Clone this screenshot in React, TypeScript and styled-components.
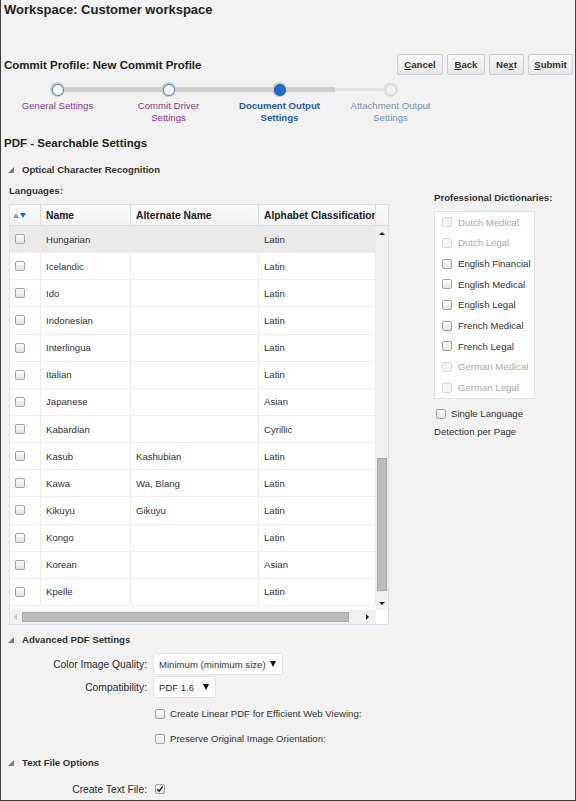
import React from 'react';
import styled, { createGlobalStyle, css } from 'styled-components';

const GlobalStyle = createGlobalStyle`
  html, body {
    margin: 0;
    padding: 0;
    background: #f2f2f2;
  }
  body {
    font-family: "Liberation Sans", Arial, sans-serif;
    color: #333;
  }
  * {
    box-sizing: border-box;
  }
`;

const Page = styled.div`
  width: 576px;
  height: 801px;
  overflow: hidden;
  background: #f2f2f2;
  border-left: 1px solid #3c3c3c;
  border-right: 1px solid #3c3c3c;
  border-bottom: 1px solid #3c3c3c;
  padding: 2px 1px 0 3px;
  font-size: 9.6px;
`;

const Title = styled.h1`
  margin: 0;
  font-size: 13px;
  line-height: 16px;
  font-weight: bold;
  color: #222;
`;

const ProfileBar = styled.div`
  display: flex;
  align-items: center;
  justify-content: space-between;
  margin-top: 36px;
  height: 21px;
  padding-right: 1px;
`;

const ProfileTitle = styled.h2`
  margin: 0;
  font-size: 11.5px;
  font-weight: bold;
  color: #222;
`;

const ButtonGroup = styled.div`
  display: flex;
  gap: 4px;
`;

const Button = styled.button<{ $w: number }>`
  width: ${p => p.$w}px;
  height: 21px;
  padding: 0;
  border: 1px solid #c9cdd1;
  border-radius: 2px;
  background: linear-gradient(#f8f8f8, #e8e8e8);
  font-family: inherit;
  font-size: 9.6px;
  font-weight: bold;
  color: #333;

  u {
    text-decoration: underline;
  }
`;

/* ---------- train ---------- */

const Train = styled.div`
  display: flex;
  margin: 7px 0 0 -2px;
`;

type Seg = 'thick' | 'thin' | undefined;

const segStyle = (s: Seg) =>
  s === 'thick'
    ? css`
        top: 5px;
        height: 5px;
        background: #cfcfcf;
      `
    : css`
        top: 6px;
        height: 3px;
        background: #e3e3e3;
      `;

const Step = styled.div<{ $before?: Seg; $after?: Seg }>`
  position: relative;
  width: 111px;
  display: flex;
  flex-direction: column;
  align-items: center;

  &::before {
    content: '';
    position: absolute;
    right: 50%;
    width: 50%;
    display: ${p => (p.$before ? 'block' : 'none')};
    ${p => segStyle(p.$before)}
  }

  &::after {
    content: '';
    position: absolute;
    left: 50%;
    width: 50%;
    display: ${p => (p.$after ? 'block' : 'none')};
    ${p => segStyle(p.$after)}
  }
`;

type StopState = 'visited' | 'current' | 'unvisited';

const Stop = styled.div<{ $state: StopState }>`
  position: relative;
  z-index: 1;
  width: 15px;
  height: 15px;
  border-radius: 50%;
  background: ${p => (p.$state === 'unvisited' ? '#e4e4e4' : '#c9c9c9')};
  display: flex;
  align-items: center;
  justify-content: center;

  &::after {
    content: '';
    width: 10px;
    height: 10px;
    border-radius: 50%;
    ${p =>
      p.$state === 'visited'
        ? css`
            background: #fff;
            border: 1.5px solid #3b83d6;
          `
        : p.$state === 'current'
        ? css`
            background: #1c6fd0;
            border: 1px solid #1761b8;
          `
        : css`
            background: #f1f1f1;
            border: 1px solid #d4d4d4;
          `}
  }
`;

const StepLabel = styled.div<{ $state: StopState }>`
  margin-top: 3px;
  text-align: center;
  line-height: 11.5px;
  font-size: 9.6px;
  color: ${p =>
    p.$state === 'visited' ? '#8a3a93' : p.$state === 'current' ? '#255b9c' : '#7391b6'};
  font-weight: ${p => (p.$state === 'current' ? 'bold' : 'normal')};
`;

/* ---------- sections ---------- */

const SectionTitle = styled.h3`
  margin: 13px 0 0;
  font-size: 11.5px;
  line-height: 14px;
  font-weight: bold;
  color: #222;
`;

const Disclosure = styled.div<{ $mt: number }>`
  display: flex;
  align-items: center;
  gap: 8px;
  margin-top: ${p => p.$mt}px;
  padding-left: 4px;
  height: 14px;
  font-size: 9.6px;
  font-weight: bold;
  color: #333;
`;

const Triangle = styled.span`
  width: 0;
  height: 0;
  border-left: 6px solid transparent;
  border-bottom: 6px solid #7a7a7a;
  margin-top: 1px;
`;

const OcrRow = styled.div`
  display: flex;
  align-items: flex-start;
`;

const LeftColumn = styled.div`
  margin-left: 5px;
`;

const FieldLabel = styled.div`
  margin-top: 9px;
  line-height: 12px;
  font-weight: bold;
  color: #333;
`;

/* ---------- table ---------- */

const COLS = [31, 90, 128, 117];

const Table = styled.div`
  margin-top: 7px;
  width: 380px;
  border: 1px solid #d9e0e7;
  background: #fff;
`;

const HeaderRow = styled.div`
  display: flex;
  height: 21px;
  background: linear-gradient(#fbfbfb, #f3f3f3);
  border-bottom: 1px solid #dedede;
`;

const HeaderCell = styled.div<{ $w: number; $pad?: number }>`
  width: ${p => p.$w}px;
  flex: none;
  display: flex;
  align-items: center;
  padding-left: ${p => p.$pad ?? 5}px;
  border-right: 1px solid #dcdcdc;
  font-size: 10.3px;
  font-weight: bold;
  color: #222;
  white-space: nowrap;
  overflow: hidden;
`;

const SortArrows = styled.div`
  display: flex;
  gap: 1px;
`;

const Arrow = styled.span<{ $dir: 'up' | 'down'; $color: string }>`
  width: 0;
  height: 0;
  border-left: 3.5px solid transparent;
  border-right: 3.5px solid transparent;
  ${p =>
    p.$dir === 'up'
      ? `border-bottom: 5px solid ${p.$color};`
      : `border-top: 5px solid ${p.$color};`}
`;

const BodyArea = styled.div`
  display: flex;
  height: 384px;
`;

const Rows = styled.div`
  width: 366px;
  overflow: hidden;
`;

const Row = styled.div<{ $selected?: boolean }>`
  display: flex;
  height: 27.15px;
  background: ${p => (p.$selected ? '#eaeaea' : '#fff')};
  border-bottom: 1px solid #efefef;
`;

const Cell = styled.div<{ $w: number }>`
  width: ${p => p.$w}px;
  flex: none;
  display: flex;
  align-items: center;
  padding-left: 5px;
  border-right: 1px solid #ececec;
  white-space: nowrap;
  overflow: hidden;
  color: #333;
`;

const VScroll = styled.div`
  width: 12px;
  background: #f1f1f1;
  display: flex;
  flex-direction: column;
  align-items: center;
  padding: 6px 0 5px;
`;

const Thumb = styled.div<{ $vertical?: boolean }>`
  background: #bcbcbc;
  border: 1px solid #a9a9a9;
  ${p =>
    p.$vertical
      ? css`
          width: 10px;
          height: 133px;
          margin-top: auto;
          margin-bottom: 11px;
        `
      : css`
          height: 10px;
          width: 327px;
        `}
`;

const TinyArrow = styled.span<{ $dir: 'up' | 'down' | 'left' | 'right'; $color?: string }>`
  width: 0;
  height: 0;
  flex: none;
  ${p => {
    const c = p.$color || '#222';
    switch (p.$dir) {
      case 'up':
        return `border-left: 3px solid transparent; border-right: 3px solid transparent; border-bottom: 3px solid ${c};`;
      case 'down':
        return `border-left: 3px solid transparent; border-right: 3px solid transparent; border-top: 3px solid ${c};`;
      case 'left':
        return `border-top: 3px solid transparent; border-bottom: 3px solid transparent; border-right: 3px solid ${c};`;
      default:
        return `border-top: 3px solid transparent; border-bottom: 3px solid transparent; border-left: 3px solid ${c};`;
    }
  }}
`;

const HScrollRow = styled.div`
  display: flex;
  height: 14px;
`;

const HScroll = styled.div`
  width: 366px;
  display: flex;
  align-items: center;
  background: #f1f1f1;
  padding: 0 7px 0 4px;
  gap: 5px;

  ${TinyArrow}:last-child {
    margin-left: auto;
  }
`;

const Corner = styled.div`
  width: 12px;
  background: #fff;
`;

/* ---------- checkboxes ---------- */

const Box = styled.span<{ $disabled?: boolean }>`
  width: 10px;
  height: 10px;
  flex: none;
  border-radius: 2px;
  border: 1px solid ${p => (p.$disabled ? '#d9d9d9' : '#a3a3a3')};
  background: ${p => (p.$disabled ? '#f4f4f4' : 'linear-gradient(#fdfdfd, #e4e4e4)')};
  display: inline-flex;
  align-items: center;
  justify-content: center;
`;

const CheckBox = ({ disabled, checked }: { disabled?: boolean; checked?: boolean }) => (
  <Box $disabled={disabled}>
    {checked && (
      <svg width="8" height="8" viewBox="0 0 8 8">
        <path d="M1.2 4.2 L3.1 6.2 L6.9 1.4" fill="none" stroke="#222" strokeWidth="1.5" />
      </svg>
    )}
  </Box>
);

/* ---------- dictionaries ---------- */

const RightPanel = styled.div`
  margin-left: 45px;
  padding-top: 16px;
`;

const DictLabel = styled.div`
  line-height: 12px;
  font-weight: bold;
  color: #333;
`;

const DictBox = styled.div`
  margin-top: 7px;
  width: 101px;
  border: 1px solid #e2e2e2;
  background: #fff;
  padding-left: 7px;
`;

const DictItem = styled.div<{ $disabled?: boolean }>`
  display: flex;
  align-items: center;
  gap: 6px;
  height: 20.66px;
  white-space: nowrap;
  color: ${p => (p.$disabled ? '#a9a9a9' : '#333')};
`;

const SingleLang = styled.div`
  display: flex;
  align-items: center;
  gap: 5px;
  margin-top: 8px;
  padding-left: 2px;
  height: 14px;
`;

const Note = styled.div`
  margin-top: 5px;
  line-height: 12px;
`;

/* ---------- form ---------- */

const FormRow = styled.div<{ $h: number; $mt?: number }>`
  display: flex;
  align-items: center;
  height: ${p => p.$h}px;
  margin-top: ${p => p.$mt || 0}px;
`;

const FormLabel = styled.div`
  width: 143px;
  flex: none;
  text-align: right;
  font-size: 10.3px;
  color: #2a2a2a;
`;

const Control = styled.div`
  margin-left: 6px;
  display: flex;
  align-items: center;
  gap: 5px;
`;

const CheckControl = styled(Control)`
  margin-left: 151px;
`;

const Select = styled.div<{ $w: number }>`
  width: ${p => p.$w}px;
  height: 22px;
  display: flex;
  align-items: center;
  justify-content: space-between;
  padding: 0 6px 0 5px;
  background: #fff;
  border: 1px solid #e3e3e3;
  border-radius: 2px;
  color: #333;
`;

const CaretDown = styled.span`
  width: 0;
  height: 0;
  border-left: 3.5px solid transparent;
  border-right: 3.5px solid transparent;
  border-top: 6px solid #111;
`;

const TextCheck = styled.div`
  margin-left: 2px;
  display: flex;
`;

const languages: [string, string, string][] = [
  ['Hungarian', '', 'Latin'],
  ['Icelandic', '', 'Latin'],
  ['Ido', '', 'Latin'],
  ['Indonesian', '', 'Latin'],
  ['Interlingua', '', 'Latin'],
  ['Italian', '', 'Latin'],
  ['Japanese', '', 'Asian'],
  ['Kabardian', '', 'Cyrillic'],
  ['Kasub', 'Kashubian', 'Latin'],
  ['Kawa', 'Wa, Blang', 'Latin'],
  ['Kikuyu', 'Gikuyu', 'Latin'],
  ['Kongo', '', 'Latin'],
  ['Korean', '', 'Asian'],
  ['Kpelle', '', 'Latin'],
];

const dictionaries = [
  { name: 'Dutch Medical', disabled: true },
  { name: 'Dutch Legal', disabled: true },
  { name: 'English Financial' },
  { name: 'English Medical' },
  { name: 'English Legal' },
  { name: 'French Medical' },
  { name: 'French Legal' },
  { name: 'German Medical', disabled: true },
  { name: 'German Legal', disabled: true },
];

const steps: { label: React.ReactNode; state: StopState; before?: Seg; after?: Seg }[] = [
  { label: 'General Settings', state: 'visited', after: 'thick' },
  { label: <>Commit Driver<br />Settings</>, state: 'visited', before: 'thick', after: 'thick' },
  { label: <>Document Output<br />Settings</>, state: 'current', before: 'thick', after: 'thick' },
  { label: <>Attachment Output<br />Settings</>, state: 'unvisited', before: 'thin' },
];

export default function App() {
  return (
    <>
      <GlobalStyle />
      <Page>
        <Title>Workspace: Customer workspace</Title>

        <ProfileBar>
          <ProfileTitle>Commit Profile: New Commit Profile</ProfileTitle>
          <ButtonGroup>
            <Button $w={46}><u>C</u>ancel</Button>
            <Button $w={38}><u>B</u>ack</Button>
            <Button $w={35}>Ne<u>x</u>t</Button>
            <Button $w={45}><u>S</u>ubmit</Button>
          </ButtonGroup>
        </ProfileBar>

        <Train>
          {steps.map((s, i) => (
            <Step key={i} $before={s.before} $after={s.after}>
              <Stop $state={s.state} />
              <StepLabel $state={s.state}>{s.label}</StepLabel>
            </Step>
          ))}
        </Train>

        <SectionTitle>PDF - Searchable Settings</SectionTitle>

        <Disclosure $mt={12}>
          <Triangle />
          Optical Character Recognition
        </Disclosure>

        <OcrRow>
          <LeftColumn>
            <FieldLabel>Languages:</FieldLabel>
            <Table>
              <HeaderRow>
                <HeaderCell $w={COLS[0]} $pad={3}>
                  <SortArrows>
                    <Arrow $dir="up" $color="#9a9a9a" />
                    <Arrow $dir="down" $color="#1a6fd0" />
                  </SortArrows>
                </HeaderCell>
                <HeaderCell $w={COLS[1]}>Name</HeaderCell>
                <HeaderCell $w={COLS[2]}>Alternate Name</HeaderCell>
                <HeaderCell $w={COLS[3]}>Alphabet Classification</HeaderCell>
              </HeaderRow>
              <BodyArea>
                <Rows>
                  {languages.map(([name, alt, alpha], i) => (
                    <Row key={name} $selected={i === 0}>
                      <Cell $w={COLS[0]}>
                        <CheckBox />
                      </Cell>
                      <Cell $w={COLS[1]}>{name}</Cell>
                      <Cell $w={COLS[2]}>{alt}</Cell>
                      <Cell $w={COLS[3]}>{alpha}</Cell>
                    </Row>
                  ))}
                </Rows>
                <VScroll>
                  <TinyArrow $dir="up" />
                  <Thumb $vertical />
                  <TinyArrow $dir="down" />
                </VScroll>
              </BodyArea>
              <HScrollRow>
                <HScroll>
                  <TinyArrow $dir="left" $color="#c4c4c4" />
                  <Thumb />
                  <TinyArrow $dir="right" />
                </HScroll>
                <Corner />
              </HScrollRow>
            </Table>
          </LeftColumn>

          <RightPanel>
            <DictLabel>Professional Dictionaries:</DictLabel>
            <DictBox>
              {dictionaries.map(d => (
                <DictItem key={d.name} $disabled={d.disabled}>
                  <CheckBox disabled={d.disabled} />
                  {d.name}
                </DictItem>
              ))}
            </DictBox>
            <SingleLang>
              <CheckBox />
              Single Language
            </SingleLang>
            <Note>Detection per Page</Note>
          </RightPanel>
        </OcrRow>

        <Disclosure $mt={7}>
          <Triangle />
          Advanced PDF Settings
        </Disclosure>

        <FormRow $h={22} $mt={7}>
          <FormLabel>Color Image Quality:</FormLabel>
          <Control>
            <Select $w={130}>
              Minimum (minimum size)
              <CaretDown />
            </Select>
          </Control>
        </FormRow>
        <FormRow $h={22} $mt={1}>
          <FormLabel>Compatibility:</FormLabel>
          <Control>
            <Select $w={63}>
              PDF 1.6
              <CaretDown />
            </Select>
          </Control>
        </FormRow>
        <FormRow $h={25} $mt={3}>
          <CheckControl>
            <CheckBox />
            Create Linear PDF for Efficient Web Viewing:
          </CheckControl>
        </FormRow>
        <FormRow $h={25}>
          <CheckControl>
            <CheckBox />
            Preserve Original Image Orientation:
          </CheckControl>
        </FormRow>

        <Disclosure $mt={4}>
          <Triangle />
          Text File Options
        </Disclosure>

        <FormRow $h={22} $mt={9}>
          <FormLabel>Create Text File:</FormLabel>
          <Control>
            <TextCheck>
              <CheckBox checked />
            </TextCheck>
          </Control>
        </FormRow>
      </Page>
    </>
  );
}
